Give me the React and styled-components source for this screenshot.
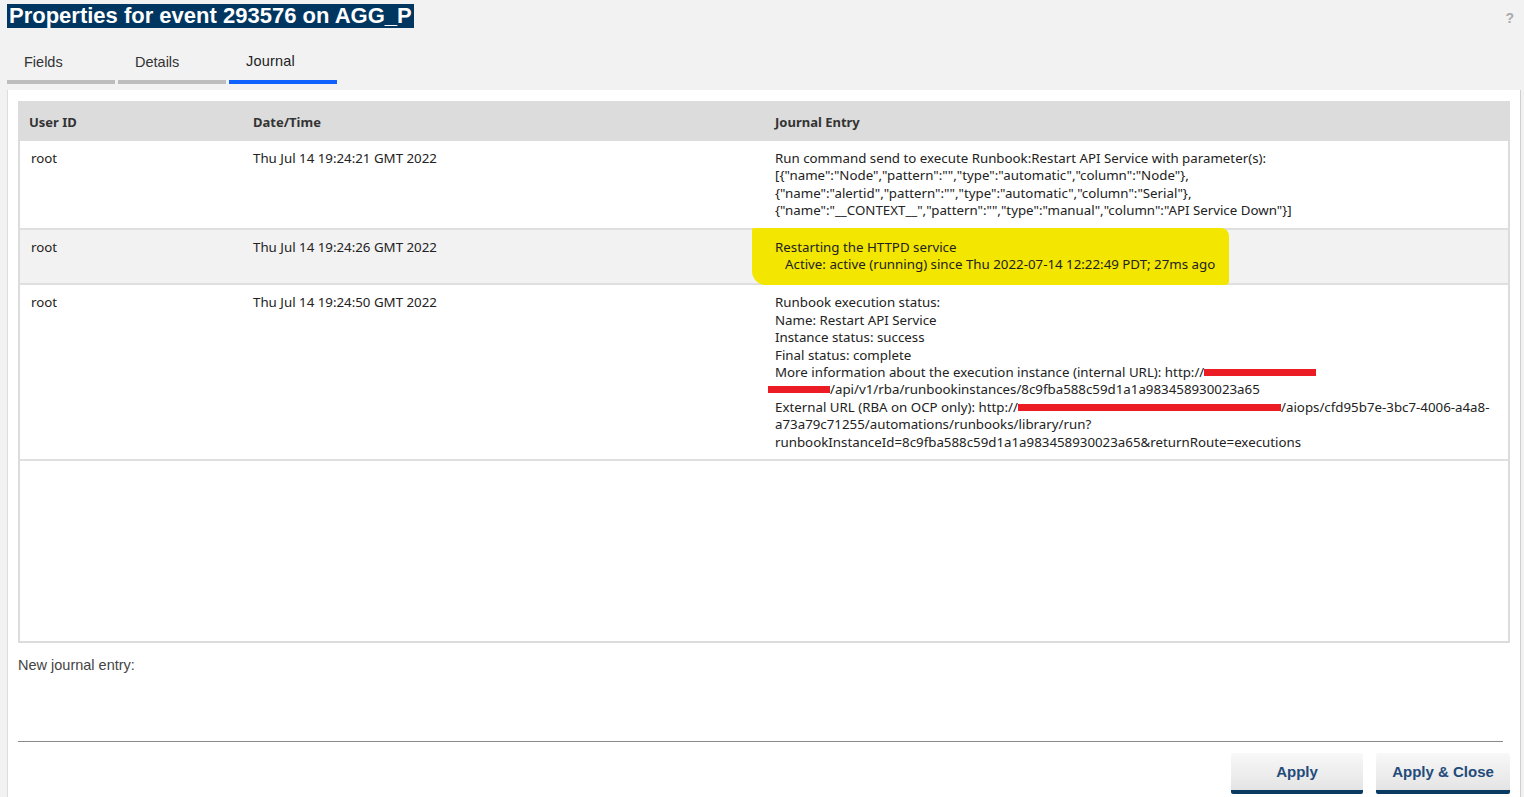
import React from "react";
import styled, { createGlobalStyle } from "styled-components";

const Global = createGlobalStyle`
  html, body { margin: 0; padding: 0; background: #f2f2f2; }
  body { font-family: "Liberation Sans", Arial, sans-serif; }
  * { box-sizing: border-box; }
`;

const Page = styled.div`
  height: 797px;
  display: flex;
  flex-direction: column;
  overflow: hidden;
`;

const TopBar = styled.div`
  height: 90px;
  padding: 4px 0 0 7px;
  flex-shrink: 0;
`;

const TitleRow = styled.div`
  display: flex;
  justify-content: space-between;
  align-items: flex-start;
`;

const Title = styled.h1`
  margin: 0;
  height: 24px;
  line-height: 24px;
  padding: 0 2px;
  background: #00365f;
  color: #fff;
  font-size: 22px;
  font-weight: bold;
`;

const Help = styled.span`
  margin: 6px 10px 0 0;
  color: #aaa;
  font-size: 14px;
  font-weight: bold;
`;

const Tabs = styled.div`
  display: flex;
  gap: 3px;
  margin-top: 12px;
`;

const Tab = styled.div`
  width: 108px;
  height: 44px;
  padding: ${(p) => (p.$active ? "13px 0 0 17px" : "14px 0 0 17px")};
  font-size: 14.5px;
  color: ${(p) => (p.$active ? "#222" : "#333")};
  letter-spacing: ${(p) => (p.$active ? "0.2px" : "0")};
  border-bottom: 4px solid ${(p) => (p.$active ? "#0f62fe" : "#bdbdbd")};
`;

const Panel = styled.div`
  flex: 1;
  margin: 0 3px 0 7px;
  background: #fff;
  border-left: 1px solid #dcdcdc;
  border-right: 1px solid #cfcfcf;
  padding: 11px 10px 0 10px;
  display: flex;
  flex-direction: column;
`;

const TableBox = styled.div`
  height: 542px;
  border: 2px solid #dcdcdc;
  overflow: visible;
`;

const JournalTable = styled.table`
  width: 100%;
  border-collapse: collapse;
  table-layout: fixed;
  font-family: "Noto Sans", Roboto, sans-serif;
  font-size: 13.3px;
  color: #222;
`;

const HeadCell = styled.th`
  height: 38px;
  background: #dcdcdc;
  text-align: left;
  font-weight: bold;
  font-size: 13px;
  color: #333;
  padding: 0 0 0 ${(p) => p.$pad || 10}px;
`;

const Row = styled.tr`
  background: ${(p) => (p.$shaded ? "#f2f2f2" : "#fff")};
  border-bottom: 2px solid #dfdfdf;
`;

const Cell = styled.td`
  vertical-align: top;
  padding: 9px 0 8px ${(p) => p.$pad || 10}px;
  line-height: 17.4px;
`;

const Line = styled.div`
  white-space: nowrap;
  padding-left: ${(p) => p.$indent || 0}px;
`;

const Highlight = styled.div`
  display: inline-block;
  background: #f3e600;
  margin: -11px 0 -10px -23px;
  padding: 11px 14px 12px 23px;
  border-radius: 2px 8px 4px 14px;
`;

const Redact = styled.span`
  display: inline-block;
  width: ${(p) => p.$w}px;
  height: 7px;
  margin-left: ${(p) => p.$shift || 0}px;
  background: #ec1c24;
  vertical-align: 1px;
`;

const EntryLabel = styled.div`
  margin-top: 14px;
  font-size: 14.5px;
  color: #444;
`;

const EntryInput = styled.div`
  height: 69px;
  margin-right: 7px;
  border-bottom: 1px solid #8a8a8a;
`;

const Actions = styled.div`
  display: flex;
  justify-content: flex-end;
  gap: 13px;
  margin-top: 11px;
`;

const ActionButton = styled.button`
  width: ${(p) => p.$w}px;
  height: 41px;
  border: none;
  border-radius: 3px 3px 2px 2px;
  border-bottom: 4px solid #0b3a63;
  background: linear-gradient(#f8f8f8, #e4e4e4);
  color: #1f4b7a;
  font-family: "Liberation Sans", Arial, sans-serif;
  font-size: 15px;
  font-weight: bold;
  padding: 0;
`;

export default function App() {
  return (
    <Page>
      <Global />
      <TopBar>
        <TitleRow>
          <Title>Properties for event 293576 on AGG_P</Title>
          <Help>?</Help>
        </TitleRow>
        <Tabs>
          <Tab>Fields</Tab>
          <Tab>Details</Tab>
          <Tab $active>Journal</Tab>
        </Tabs>
      </TopBar>
      <Panel>
        <TableBox>
          <JournalTable>
            <colgroup>
              <col style={{ width: 223 }} />
              <col style={{ width: 522 }} />
              <col />
            </colgroup>
            <thead>
              <tr>
                <HeadCell $pad={9}>User ID</HeadCell>
                <HeadCell>Date/Time</HeadCell>
                <HeadCell>Journal Entry</HeadCell>
              </tr>
            </thead>
            <tbody>
              <Row>
                <Cell $pad={11}>root</Cell>
                <Cell>Thu Jul 14 19:24:21 GMT 2022</Cell>
                <Cell>
                  <Line>Run command send to execute Runbook:Restart API Service with parameter(s):</Line>
                  <Line>[{'{"name":"Node","pattern":"","type":"automatic","column":"Node"},'}</Line>
                  <Line>{'{"name":"alertid","pattern":"","type":"automatic","column":"Serial"},'}</Line>
                  <Line>{'{"name":"__CONTEXT__","pattern":"","type":"manual","column":"API Service Down"}]'}</Line>
                </Cell>
              </Row>
              <Row $shaded>
                <Cell $pad={11}>root</Cell>
                <Cell>Thu Jul 14 19:24:26 GMT 2022</Cell>
                <Cell>
                  <Highlight>
                    <Line>Restarting the HTTPD service</Line>
                    <Line $indent={10}>Active: active (running) since Thu 2022-07-14 12:22:49 PDT; 27ms ago</Line>
                  </Highlight>
                </Cell>
              </Row>
              <Row>
                <Cell $pad={11}>root</Cell>
                <Cell>Thu Jul 14 19:24:50 GMT 2022</Cell>
                <Cell>
                  <Line>Runbook execution status:</Line>
                  <Line>Name: Restart API Service</Line>
                  <Line>Instance status: success</Line>
                  <Line>Final status: complete</Line>
                  <Line>
                    More information about the execution instance (internal URL): http://<Redact $w={112} />
                  </Line>
                  <Line>
                    <Redact $w={62} $shift={-7} />/api/v1/rba/runbookinstances/8c9fba588c59d1a1a983458930023a65
                  </Line>
                  <Line>
                    External URL (RBA on OCP only): http://<Redact $w={263} />/aiops/cfd95b7e-3bc7-4006-a4a8-
                  </Line>
                  <Line>a73a79c71255/automations/runbooks/library/run?</Line>
                  <Line>runbookInstanceId=8c9fba588c59d1a1a983458930023a65&amp;returnRoute=executions</Line>
                </Cell>
              </Row>
            </tbody>
          </JournalTable>
        </TableBox>
        <EntryLabel>New journal entry:</EntryLabel>
        <EntryInput />
        <Actions>
          <ActionButton $w={132}>Apply</ActionButton>
          <ActionButton $w={134}>Apply &amp; Close</ActionButton>
        </Actions>
      </Panel>
    </Page>
  );
}
